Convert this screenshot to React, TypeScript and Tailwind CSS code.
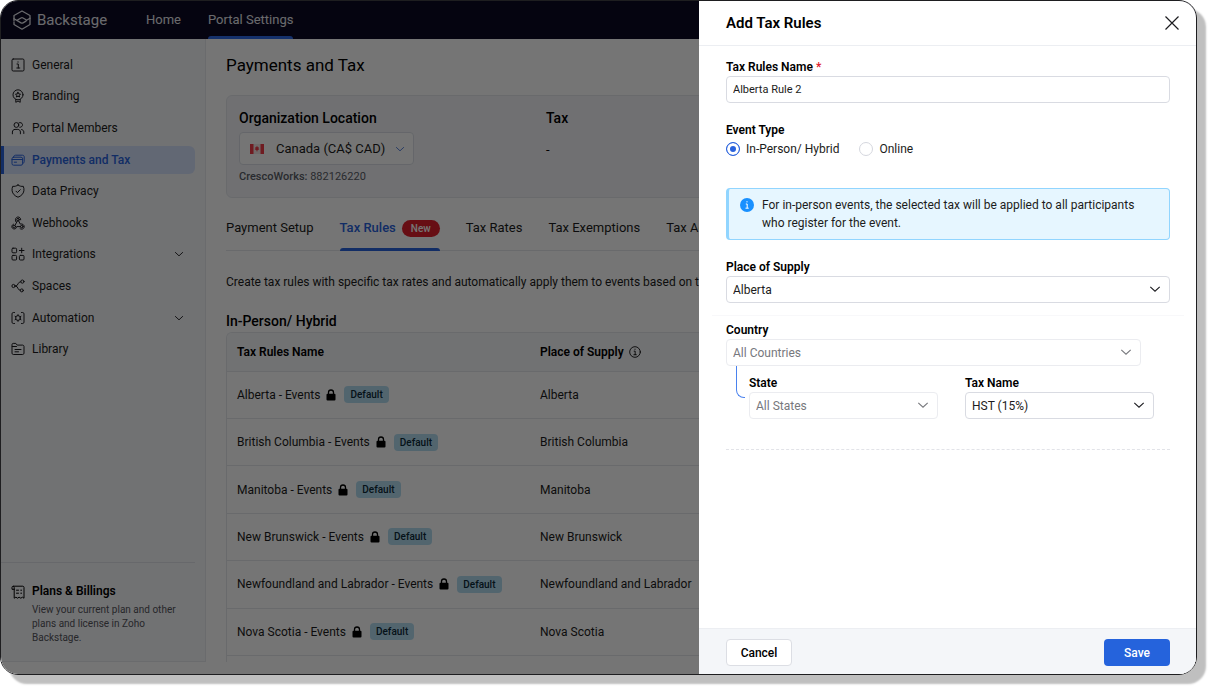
import type { ReactNode } from "react";
import { clsx } from "clsx";

interface IconProps {
  className?: string;
  children?: ReactNode;
}

function Icon({ className, children }: IconProps) {
  return (
    <svg
      viewBox="0 0 14 14"
      fill="none"
      stroke="currentColor"
      strokeLinecap="round"
      strokeLinejoin="round"
      className={clsx("shrink-0", className ?? "h-3.5 w-3.5")}
      aria-hidden="true"
    >
      {children}
    </svg>
  );
}

function Chevron({ className }: { className?: string }) {
  return (
    <svg viewBox="0 0 12 12" fill="none" stroke="currentColor" className={clsx("shrink-0", className)} aria-hidden="true">
      <path d="M1.3 3.8 6 8.2l4.7-4.4" strokeWidth="1.1" />
    </svg>
  );
}

const GeneralIcon = (
  <Icon>
    <rect x="1" y="1" width="12" height="12" rx="1.2" />
    <path d="M6 6h1.3v4M5.8 10h3M7 3.8v.4" />
  </Icon>
);

const BrandingIcon = (
  <Icon>
    <circle cx="7" cy="5.8" r="5" />
    <path d="m7 3.3.8 1.6 1.7.2-1.2 1.2.3 1.7L7 7.2 5.4 8l.3-1.7-1.2-1.2 1.7-.2z" />
    <path d="M4.8 10.5v2.8L7 12l2.2 1.3v-2.8" />
  </Icon>
);

const MembersIcon = (
  <Icon>
    <circle cx="5.4" cy="4" r="2.4" />
    <path d="M8 1.8a2.4 2.4 0 1 1 .8 4.5M1.4 12.8V11c0-1.5 1.1-2.6 2.6-2.6h2.800c1.500 0 2.600 1.100 2.600 2.600v1.800M10.600 8.500c1.300.3 2.200 1.200 2.200 2.500v1.500" />
  </Icon>
);

const CardIcon = (
  <Icon>
    <rect x="1" y="4.2" width="10.6" height="8" rx="1.6" />
    <path d="M2.6 4c.2-1.2.9-1.8 2-1.8h6.9c1.1 0 1.7.7 1.7 1.7v4.7c0 .9-.5 1.6-1.4 1.8M1 6.5h10.6M3.3 9.2h2.2" />
  </Icon>
);

const ShieldIcon = (
  <Icon>
    <path d="M7 1c1.6 1.2 3.5 1.6 5.3 1.3.6 1.5.8 3 .6 4.5-.4 3-2.9 5.4-5.900 6.400-3-1-5.500-3.400-5.900-6.400-.2-1.500 0-3 .6-4.500C3.500 2.600 5.400 2.200 7 1z" />
    <path d="m5 7.2 1.4 1.4 2.9-2.9" />
  </Icon>
);

const WebhookIcon = (
  <Icon>
    <circle cx="7" cy="3.7" r="1.3" />
    <circle cx="3.2" cy="10.6" r="1.3" />
    <circle cx="10.8" cy="10.6" r="1.3" />
    <path d="M6.4 4.9 3.9 9.5M7.6 4.9l1.7 3.2c1.8-.6 3.9.5 3.9 2.6 0 2.2-2.6 3.3-4.2 1.9M9.500 10.600H5.700c-.2 1.700-1.500 2.600-3 2.300-2.500-.5-2.500-4-.2-4.700M4.800 5.600C3.600 3.400 5 1 7 1c1.600 0 2.800 1.200 2.700 2.800" />
  </Icon>
);

const IntegrationsIcon = (
  <Icon>
    <rect x="1" y="1.2" width="4.6" height="4.6" rx="1" />
    <rect x="1" y="8.4" width="4.6" height="4.6" rx="1" />
    <rect x="8.4" y="8.4" width="4.6" height="4.6" rx="1" />
    <path d="M10.7 1.2v4.6M8.4 3.5H13" />
  </Icon>
);

const SpacesIcon = (
  <Icon>
    <circle cx="2.5" cy="7" r="1.6" />
    <circle cx="11.4" cy="2.6" r="1.6" />
    <circle cx="10.8" cy="11.4" r="1.5" />
    <path d="M4.1 7H5c2 0 1.7-4.4 4.8-4.4M5 7c2.2 0 1.3 4.4 4.3 4.4" />
  </Icon>
);

const AutomationIcon = (
  <Icon>
    <path d="M3.5 1.5H2.3c-.7 0-1.3.6-1.3 1.3v8.4c0 .7.6 1.3 1.3 1.3h1.2M10.5 1.5h1.2c.7 0 1.3.6 1.3 1.3v8.4c0 .7-.6 1.3-1.3 1.3h-1.2" />
    <circle cx="7" cy="7" r="2.4" />
    <path d="M7 3.6v1M7 9.4v1M4 5.3l.9.5M9.1 8.2l.9.5M10 5.3l-.9.5M4.9 8.2l-.9.5" />
  </Icon>
);

const LibraryIcon = (
  <Icon>
    <path d="M1 4.5V2.6c0-.7.5-1.2 1.2-1.2h2.6l1.4 1.7h5.5c.7 0 1.3.6 1.3 1.3v6.8c0 .7-.6 1.3-1.3 1.3H2.3c-.7 0-1.3-.6-1.3-1.3V4.5h4.5M4 7.5h6M4 9.8h3.5" />
  </Icon>
);

const BillIcon = (
  <Icon>
    <path d="M3.2 4.3H1V2.4c0-.7.5-1.2 1.2-1.2h9.6c.7 0 1.2.5 1.2 1.2v10.8l-1.6-1-1.6 1-1.7-1-1.6 1-1.6-1-1.7 1V2.4c0-.6-.3-1-.8-1.2" />
    <path d="M5.5 5.2h2M9.8 5.2h.8M5.5 8.2h2M9.8 8.2h.8" />
  </Icon>
);

const navItems = [
  { label: "General", icon: GeneralIcon },
  { label: "Branding", icon: BrandingIcon },
  { label: "Portal Members", icon: MembersIcon },
  { label: "Payments and Tax", icon: CardIcon, active: true },
  { label: "Data Privacy", icon: ShieldIcon },
  { label: "Webhooks", icon: WebhookIcon },
  { label: "Integrations", icon: IntegrationsIcon, expandable: true },
  { label: "Spaces", icon: SpacesIcon },
  { label: "Automation", icon: AutomationIcon, expandable: true },
  { label: "Library", icon: LibraryIcon },
];

const tabs = ["Payment Setup", "Tax Rules", "Tax Rates", "Tax Exemptions", "Tax Agencies"];

const provinces = [
  "Alberta",
  "British Columbia",
  "Manitoba",
  "New Brunswick",
  "Newfoundland and Labrador",
  "Nova Scotia",
];

function TopBar() {
  return (
    <header className="flex h-[38px] shrink-0 items-center bg-[#0b0a24] pl-3 text-[#e8e8ee]">
      <div className="flex w-[133px] items-center gap-1.5">
        <svg
          viewBox="0 0 18 20"
          fill="none"
          stroke="currentColor"
          strokeWidth="1.3"
          strokeLinejoin="round"
          strokeLinecap="round"
          className="h-5 w-[18px]"
          aria-hidden="true"
        >
          <path d="M1 11V5.5L9 1l8 4.5v9l-8 4.700-8-4.700v-2.200" />
          <path d="m1 8.800 7 4.100c.7.4 1.300.4 2 0l2.600-1.500c1-.6 1-1.300 0-1.900L10 8c-.7-.4-1.300-.4-2 0l-3.500 2M13.500 10.300l3.500-2" />
        </svg>
        <span className="text-[15px]">Backstage</span>
      </div>
      <nav className="flex h-full gap-[27px] text-[13px]">
        <a href="#home" className="flex items-center">
          Home
        </a>
        <a href="#settings" className="relative flex items-center">
          Portal Settings
          <span className="absolute inset-x-0 bottom-0 h-[3px] rounded-t-sm bg-[#2f6bea]" />
        </a>
      </nav>
    </header>
  );
}

function Sidebar() {
  return (
    <aside className="mb-3 flex w-[205px] shrink-0 flex-col border-r border-b border-[#e6e9ee] bg-[#f7f8fb]">
      <nav className="mt-[10px] grid h-[316px] grid-rows-10 text-[12px] text-[#1c1c20]">
        {navItems.map((item) => (
          <a
            key={item.label}
            href="#nav"
            className={clsx(
              "mr-[10px] flex h-7 items-center gap-[7px] self-center",
              item.active
                ? "rounded-r-md border-l-[3px] border-[#2962dd] bg-[#d5e3fc] pl-[7px] font-medium text-[#2962dd]"
                : "pl-[10px]"
            )}
          >
            {item.icon}
            <span className="flex-1">{item.label}</span>
            {item.expandable && <Chevron className="mr-[11px] h-2.5 w-2.5" />}
          </a>
        ))}
      </nav>
      <a
        href="#plans"
        className="mt-auto mr-[10px] flex gap-[7px] border-t border-[#e0e3ea] pt-5 pb-4 pl-[10px]"
      >
        <span className="mt-0.5">{BillIcon}</span>
        <span className="flex flex-col gap-1">
          <span className="text-[12px] leading-4 font-semibold text-black">Plans &amp; Billings</span>
          <span className="text-[10px] leading-[14px] text-[#55565c]">
            View your current plan and other plans and license in Zoho Backstage.
          </span>
        </span>
      </a>
    </aside>
  );
}

function CanadaFlag() {
  return (
    <svg viewBox="0 0 14 10" className="mr-3 h-2.5 w-3.5" aria-hidden="true">
      <rect width="14" height="10" fill="#f4e6e6" />
      <path d="M0 0h3.5v10H0zM10.5 0H14v10h-3.5z" fill="#f23b48" />
      <path
        d="m7 1.8.8 1.5.9-.3-.2 1.500.9.5-1.900 1.500h-.3v1.300h-.4V6.500h-.3L4.600 5l.9-.5-.2-1.500.9.3z"
        fill="#f23b48"
      />
    </svg>
  );
}

function OrganizationCard() {
  return (
    <section className="mt-[19px] flex h-[103px] rounded-md border border-[#e4e7ec] bg-[#f3f5f9] pt-[14px] pl-3">
      <div className="w-[307px]">
        <h2 className="text-[14px] leading-4 font-medium text-black">Organization Location</h2>
        <button
          type="button"
          className="mt-[6px] flex h-[33px] w-[175px] items-center rounded border border-[#dcdfe6] bg-white pr-2 pl-[10px] text-left text-[13px] text-[#1c1c20]"
        >
          <CanadaFlag />
          <span className="flex-1 whitespace-nowrap">Canada (CA$ CAD)</span>
          <Chevron className="h-2.5 w-2.5 text-[#4a78d8]" />
        </button>
        <p className="mt-1 text-[11px] leading-4 text-[#5b5d66]">
          <span className="font-medium">CrescoWorks:</span> 882126220
        </p>
      </div>
      <div>
        <h2 className="text-[14px] leading-4 font-medium text-black">Tax</h2>
        <p className="mt-4 text-[13px] leading-4">-</p>
      </div>
    </section>
  );
}

function RulesTable() {
  return (
    <div className="mb-3 flex-1 overflow-hidden rounded-tl-md border-t border-l border-[#e4e7ec]">
      <table className="h-[323px] w-full table-fixed border-collapse text-left text-[12px] text-[#1c1c20]">
        <thead>
          <tr className="h-[38px] border-b border-[#e4e7ec] bg-[#f7f8fb] text-black">
            <th className="w-[303px] pl-[10px] font-semibold">Tax Rules Name</th>
            <th className="pl-[10px] font-semibold">
              <span className="flex items-center gap-[5px]">
                Place of Supply
                <Icon className="h-3 w-3">
                  <circle cx="7" cy="7" r="6.2" />
                  <path d="M6 6h1.2v4M5.7 10.2h2.8M7 3.6v.4" />
                </Icon>
              </span>
            </th>
          </tr>
        </thead>
        <tbody>
          {provinces.map((province) => (
            <tr key={province} className="border-b border-[#e4e7ec]">
              <td className="pl-[10px] whitespace-nowrap">
                <span className="flex items-center">
                  {province} - Events
                  <svg viewBox="0 0 10 12" className="mr-2 ml-[6px] h-3 w-2.5" aria-hidden="true">
                    <path d="M2.5 5.5v-2a2.500 2.500 0 0 1 5 0v2" fill="none" stroke="#000" strokeWidth="1.3" />
                    <rect x=".5" y="4.8" width="9" height="6.7" rx="1" />
                  </svg>
                  <span className="rounded bg-[#b3dcf0] px-[6px] text-[10px] leading-[17px] font-medium text-[#0d2a38]">
                    Default
                  </span>
                </span>
              </td>
              <td className="pl-[10px] whitespace-nowrap">{province}</td>
            </tr>
          ))}
        </tbody>
      </table>
    </div>
  );
}

function SettingsPage() {
  return (
    <main className="flex min-w-0 flex-1 flex-col overflow-hidden bg-white pt-[15px] pl-5">
      <h1 className="text-[17px] leading-[22px] text-black">Payments and Tax</h1>
      <OrganizationCard />
      <nav className="mt-[18px] flex h-[35px] gap-[26px] border-b border-[#e4e7ec] text-[13px] whitespace-nowrap text-[#1c1c20]">
        {tabs.map((tab) =>
          tab === "Tax Rules" ? (
            <a key={tab} href="#rules" className="relative flex h-6 items-center gap-[6px] font-medium text-[#2962dd]">
              {tab}
              <span className="rounded-full bg-[#e0202c] px-[9px] text-[10px] leading-[17px] text-white">New</span>
              <span className="absolute inset-x-0 top-8 h-[3px] rounded-t-sm bg-[#2962dd]" />
            </a>
          ) : (
            <a key={tab} href="#tab" className="flex h-6 items-center">
              {tab}
            </a>
          )
        )}
      </nav>
      <p className="mt-[23px] text-[12px] leading-4 whitespace-nowrap text-[#1c1c20]">
        Create tax rules with specific tax rates and automatically apply them to events based on the place of supply.
      </p>
      <h2 className="mt-[23px] mb-[3px] text-[14px] leading-4 font-medium text-black">In-Person/ Hybrid</h2>
      <RulesTable />
    </main>
  );
}

interface SelectFieldProps {
  id: string;
  label: string;
  value: string;
  muted?: boolean;
  className?: string;
}

function SelectField({ id, label, value, muted, className }: SelectFieldProps) {
  return (
    <div className={className}>
      <label htmlFor={id} className="block text-[12px] leading-4 font-semibold text-black">
        {label}
      </label>
      <div className="relative mt-px">
        <select
          id={id}
          className={clsx(
            "block h-[27px] w-full appearance-none rounded border bg-white pl-[6px] text-[12px]",
            muted ? "border-[#ebecf0] text-[#77787d]" : "border-[#d9dbe2] text-[#1c1c20]"
          )}
        >
          <option>{value}</option>
        </select>
        <Chevron
          className={clsx(
            "pointer-events-none absolute top-[7px] right-[9px] h-3 w-3",
            muted ? "text-[#77787d]" : "text-[#1c1c20]"
          )}
        />
      </div>
    </div>
  );
}

function EventTypeOption({ label, defaultChecked }: { label: string; defaultChecked?: boolean }) {
  return (
    <label className="flex items-center gap-[6px] text-[12px] leading-4 text-[#1c1c20]">
      <input
        type="radio"
        name="event-type"
        defaultChecked={defaultChecked}
        className="h-[14px] w-[14px] appearance-none rounded-full border border-[#d5d7de] bg-white checked:border-[#2962dd] checked:bg-[#2962dd] checked:shadow-[inset_0_0_0_3px_#fff]"
      />
      {label}
    </label>
  );
}

function AddTaxRulesPanel() {
  return (
    <section
      role="dialog"
      aria-label="Add Tax Rules"
      className="absolute inset-y-0 right-0 flex w-[497px] max-w-full flex-col bg-white"
    >
      <div className="flex h-[45px] shrink-0 items-center justify-between border-b border-[#eceef2] pr-[17px] pl-[27px]">
        <h2 className="text-[15px] font-semibold text-black">Add Tax Rules</h2>
        <button type="button" aria-label="Close">
          <svg viewBox="0 0 14 14" stroke="#1c1c20" strokeWidth="1.2" className="h-3.5 w-3.5" aria-hidden="true">
            <path d="m.5.5 13 13M13.5.5l-13 13" />
          </svg>
        </button>
      </div>

      <form className="flex-1 pt-[13px] pr-[26px] pl-[27px]">
        <label htmlFor="rule-name" className="block text-[12px] leading-4 font-semibold text-black">
          Tax Rules Name <span className="text-[#e0202c]">*</span>
        </label>
        <input
          id="rule-name"
          type="text"
          defaultValue="Alberta Rule 2"
          className="mt-px block h-[27px] w-full rounded border border-[#d9dbe2] px-[6px] text-[11px] text-[#1c1c20]"
        />

        <fieldset className="mt-[19px]">
          <legend className="text-[12px] leading-4 font-semibold text-black">Event Type</legend>
          <div className="mt-[3px] flex gap-5">
            <EventTypeOption label="In-Person/ Hybrid" defaultChecked />
            <EventTypeOption label="Online" />
          </div>
        </fieldset>

        <div className="mt-[31px] flex gap-2 rounded border border-l-[3px] border-[#91d5ff] bg-[#e6f6ff] py-[7px] pr-[25px] pl-[11px]">
          <svg viewBox="0 0 14 14" className="mt-[2px] h-3.5 w-3.5 shrink-0" aria-hidden="true">
            <circle cx="7" cy="7" r="7" fill="#1890ff" />
            <path d="M5.8 6h1.4v4M5.5 10.2h3.2M7 3.2v1.2" stroke="#fff" fill="none" />
          </svg>
          <p className="text-[12px] leading-[18px] text-[#1c1c20]">
            For in-person events, the selected tax will be applied to all participants who register for the event.
          </p>
        </div>

        <SelectField id="supply" label="Place of Supply" value="Alberta" className="mt-[19px]" />
        <hr className="-mx-[14px] mt-3 border-[#f8f8fa]" />

        <SelectField id="country" label="Country" value="All Countries" muted className="mt-[6px] mr-[29px]" />
        <div className="mr-4 flex pl-[10px]">
          <span className="h-8 w-[9px] rounded-bl-lg border-b border-l border-[#4a82ee]" />
          <div className="mt-[9px] ml-1 grid flex-1 grid-cols-2 gap-[27px]">
            <SelectField id="state" label="State" value="All States" muted />
            <SelectField id="tax" label="Tax Name" value="HST (15%)" />
          </div>
        </div>
        <hr className="mt-[30px] border-dashed border-[#e2e3e8]" />
      </form>

      <footer className="flex h-[46px] shrink-0 items-center justify-between border-t border-[#eceef2] bg-[#f4f6f9] pt-[2px] pr-[26px] pl-[27px] text-[12px] font-medium">
        <button type="button" className="h-[27px] w-[66px] rounded border border-[#dcdee4] bg-white text-black">
          Cancel
        </button>
        <button type="button" className="h-[27px] w-[66px] rounded bg-[#2563dc] text-white">
          Save
        </button>
      </footer>
    </section>
  );
}

export default function App() {
  return (
    <div className="flex h-screen bg-white pr-3 pb-3 font-['Roboto','Liberation_Sans',sans-serif]">
      <div className="relative flex min-w-0 flex-1 flex-col overflow-hidden rounded-[18px] border border-[#1e1e20] shadow-[9px_9px_2px_#bfbfbf]">
        <TopBar />
        <div className="flex min-h-0 flex-1 bg-white">
          <Sidebar />
          <SettingsPage />
        </div>
        <div className="absolute inset-0 bg-black/54" />
        <AddTaxRulesPanel />
      </div>
    </div>
  );
}
